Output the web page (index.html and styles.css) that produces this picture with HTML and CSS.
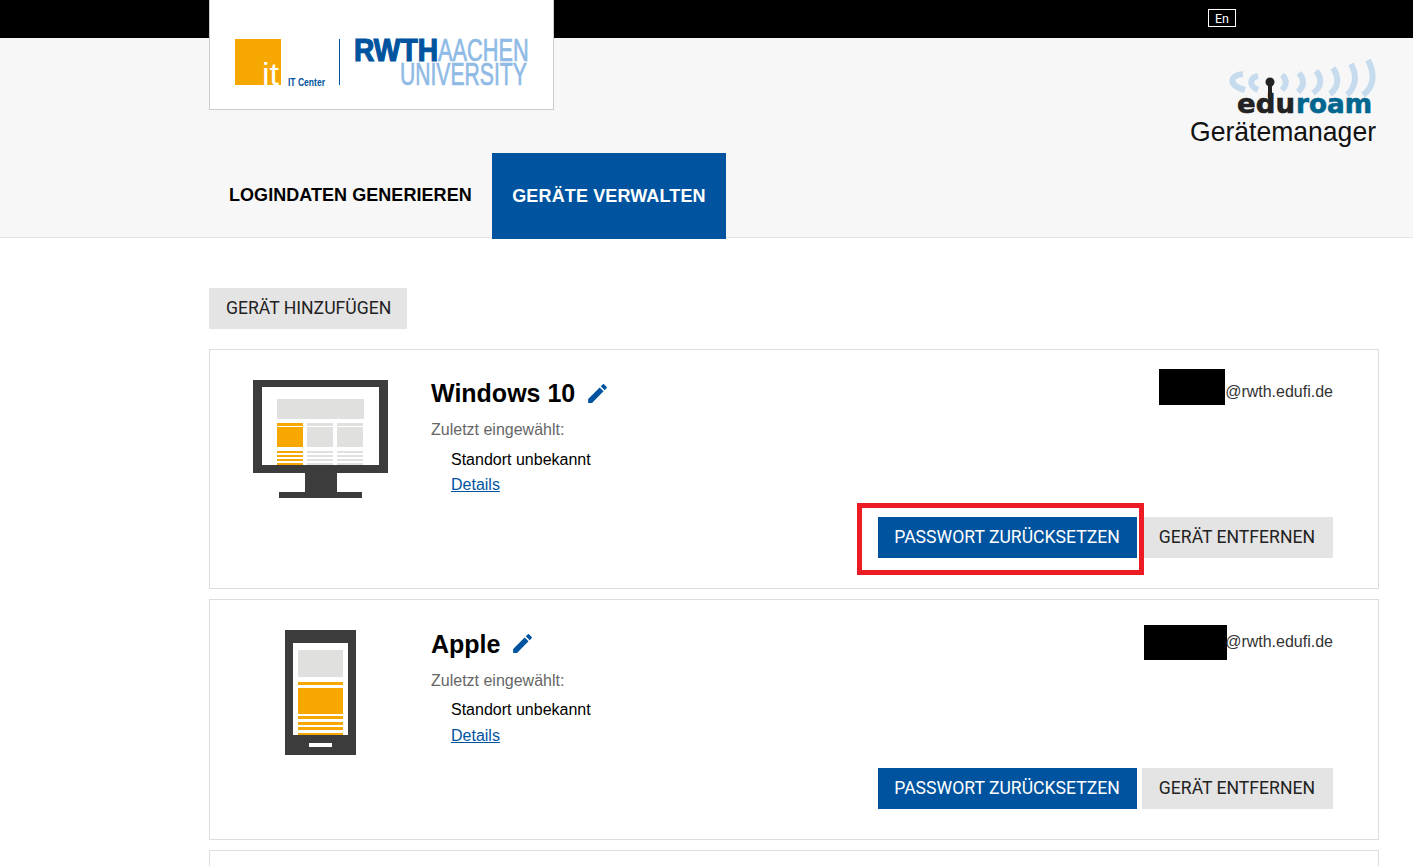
FILE: index.html
```html
<!DOCTYPE html>
<html lang="de">
<head>
    <meta charset="UTF-8">
    <meta name="viewport" content="width=device-width, initial-scale=1.0">
    <title>eduroam Gerätemanager</title>
    <link rel="stylesheet" href="styles.css">
</head>
<body>
    <div class="topbar">
        <a class="lang" href="#">En</a>
    </div>

    <a class="logo-box" href="#">
        <svg class="logo" width="345" height="110" viewBox="0 0 345 110">
            <rect x="26" y="39" width="46" height="46" fill="#f7a800"/>
            <text x="53" y="85" class="logo-it" textLength="17" lengthAdjust="spacingAndGlyphs">it</text>
            <text x="79" y="86" class="logo-center" textLength="37" lengthAdjust="spacingAndGlyphs">IT Center</text>
            <rect x="130" y="39" width="1" height="46" fill="#00549f"/>
            <text x="145" y="61" class="logo-rwth" textLength="84" lengthAdjust="spacingAndGlyphs">RWTH</text>
            <text class="logo-aachen" transform="translate(229 61) scale(.68 1)">AACHEN</text>
            <text class="logo-aachen" transform="translate(191 85) scale(.66 1)">UNIVERSITY</text>
        </svg>
    </a>

    <header class="header">
        <div class="brand">
            <svg class="eduroam" width="210" height="100" viewBox="0 0 210 100">
                <g fill="none" stroke="#c6dcee" stroke-width="6">
                    <path d="M63 20C50 21 47 31 65 36"/>
                    <path d="M78 22C69 24 69 32 78 36"/>
                    <path d="M102 21C107 25 107 31 102 36"/>
                    <path d="M119 19C125 26 124 33 118 38"/>
                    <path d="M136 17C143 25 141 34 133 39"/>
                    <path d="M153 14C160 24 158 34 150 40"/>
                    <path d="M171 10C178 22 175 34 167 41"/>
                    <path d="M188 6C196 21 193 34 183 41"/>
                </g>
                <circle cx="90" cy="28" r="4.500" fill="#222"/>
                <rect x="88" y="30" width="4" height="14" fill="#222"/>
                <text x="57" y="58.500" class="edu" textLength="58" lengthAdjust="spacingAndGlyphs">edu</text>
                <text x="116" y="58.500" class="roam" textLength="76" lengthAdjust="spacingAndGlyphs">roam</text>
                <text x="10" y="87" class="geraete" textLength="186" lengthAdjust="spacingAndGlyphs">Gerätemanager</text>
            </svg>
        </div>
        <nav class="tabs">
            <a class="tab" href="#">LOGINDATEN GENERIEREN</a>
            <a class="tab active" href="#">GERÄTE VERWALTEN</a>
        </nav>
    </header>

    <main class="content">
        <a class="btn btn-grey add-btn" href="#">GERÄT HINZUFÜGEN</a>

        <section class="card">
            <div class="device-icon">
                <svg width="135" height="118" viewBox="0 0 135 118">
                    <rect x="52" y="90" width="32" height="24" fill="#3c3c3c"/>
                    <rect x="26" y="112" width="83" height="6" fill="#3c3c3c"/>
                    <rect width="135" height="93" fill="#3c3c3c"/>
                    <rect x="9" y="7" width="117" height="78" fill="#fff"/>
                    <rect x="24" y="19" width="87" height="20" fill="#e0e0de"/>
                    <g fill="#f7a800">
                        <rect x="24" y="43" width="26" height="3"/>
                        <rect x="24" y="47" width="26" height="20"/>
                        <rect x="24" y="71" width="26" height="2"/>
                        <rect x="24" y="75" width="26" height="2"/>
                        <rect x="24" y="79" width="26" height="2"/>
                        <rect x="24" y="83" width="26" height="2"/>
                    </g>
                    <g fill="#e0e0de">
                        <rect x="54" y="43" width="26" height="3"/>
                        <rect x="54" y="47" width="26" height="20"/>
                        <rect x="54" y="71" width="26" height="2"/>
                        <rect x="54" y="75" width="26" height="2"/>
                        <rect x="54" y="79" width="26" height="2"/>
                        <rect x="54" y="83" width="26" height="2"/>
                        <rect x="84" y="43" width="26" height="3"/>
                        <rect x="84" y="47" width="26" height="20"/>
                        <rect x="84" y="71" width="26" height="2"/>
                        <rect x="84" y="75" width="26" height="2"/>
                        <rect x="84" y="79" width="26" height="2"/>
                        <rect x="84" y="83" width="26" height="2"/>
                    </g>
                </svg>
            </div>
            <div class="card-main">
                <div class="card-top">
                    <div class="info">
                        <h2 class="device-name">Windows 10
                            <svg class="pencil" width="25" height="25" viewBox="0 0 24 24"><path d="M3 17.25V21h3.750L17.810 9.940l-3.750-3.750L3 17.250zM20.710 7.040c.39-.39.39-1.020 0-1.410l-2.340-2.340c-.39-.39-1.020-.39-1.410 0l-1.830 1.830 3.750 3.750 1.830-1.830z"/></svg>
                        </h2>
                        <p class="last-seen">Zuletzt eingewählt:</p>
                        <p class="location">Standort unbekannt</p>
                        <a class="details" href="#">Details</a>
                    </div>
                    <div class="account">
                        <span class="redact redact-a"></span>
                        <span class="account-domain">@rwth.edufi.de</span>
                    </div>
                </div>
                <div class="actions">
                    <span class="marked">
                        <a class="btn btn-blue" href="#">PASSWORT ZURÜCKSETZEN</a>
                        <span class="red-frame"></span>
                    </span>
                    <a class="btn btn-grey" href="#">GERÄT ENTFERNEN</a>
                </div>
            </div>
        </section>

        <section class="card">
            <div class="device-icon">
                <svg width="71" height="125" viewBox="0 0 71 125">
                    <rect width="71" height="125" fill="#3c3c3c"/>
                    <rect x="8" y="13" width="55" height="92" fill="#fff"/>
                    <rect x="13" y="20" width="45" height="27" fill="#e0e0de"/>
                    <g fill="#f7a800">
                        <rect x="13" y="52" width="45" height="3"/>
                        <rect x="13" y="58" width="45" height="26"/>
                        <rect x="13" y="86" width="45" height="3"/>
                        <rect x="13" y="92" width="45" height="3"/>
                        <rect x="13" y="97" width="45" height="3"/>
                        <rect x="13" y="103" width="45" height="2"/>
                    </g>
                    <rect x="24" y="113" width="23" height="4" fill="#fff"/>
                </svg>
            </div>
            <div class="card-main">
                <div class="card-top">
                    <div class="info">
                        <h2 class="device-name">Apple
                            <svg class="pencil" width="25" height="25" viewBox="0 0 24 24"><path d="M3 17.25V21h3.750L17.810 9.940l-3.750-3.750L3 17.250zM20.710 7.040c.39-.39.39-1.020 0-1.410l-2.340-2.340c-.39-.39-1.020-.39-1.410 0l-1.830 1.830 3.750 3.750 1.830-1.830z"/></svg>
                        </h2>
                        <p class="last-seen">Zuletzt eingewählt:</p>
                        <p class="location">Standort unbekannt</p>
                        <a class="details" href="#">Details</a>
                    </div>
                    <div class="account">
                        <span class="redact redact-b"></span>
                        <span class="account-domain">@rwth.edufi.de</span>
                    </div>
                </div>
                <div class="actions">
                    <a class="btn btn-blue" href="#">PASSWORT ZURÜCKSETZEN</a>
                    <a class="btn btn-grey" href="#">GERÄT ENTFERNEN</a>
                </div>
            </div>
        </section>

        <section class="card card-cut"></section>
    </main>
</body>
</html>
```

FILE: styles.css
```css
html, body {
    height: 100%;
    overflow: hidden;
}
body {
    margin: 0;
    font-family: "Liberation Sans", Arial, sans-serif;
    font-size: 16px;
    color: #000;
    background: #fff;
}
a {
    text-decoration: none;
}
.topbar {
    height: 38px;
    background: #000;
    display: flex;
    justify-content: flex-end;
    align-items: flex-start;
    padding-right: 177px;
}
.lang {
    margin-top: 9px;
    width: 26px;
    height: 16px;
    border: 1px solid #fff;
    color: #fff;
    font-family: Roboto, sans-serif;
    font-size: 12.5px;
    line-height: 18px;
    text-align: center;
}
.logo-box {
    position: absolute;
    z-index: 2;
    top: 0;
    left: 209px;
    width: 343px;
    height: 109px;
    background: #fff;
    border: 1px solid #ccc;
    border-top: none;
}
.logo {
    display: block;
    margin-left: -1px;
}
.logo-it {
    font-family: "Liberation Sans", sans-serif;
    font-size: 32px;
    fill: #fff;
}
.logo-center {
    font-family: "Liberation Sans", sans-serif;
    font-size: 10px;
    font-weight: bold;
    fill: #00549f;
}
.logo-rwth {
    font-family: "Liberation Sans", sans-serif;
    font-size: 31px;
    font-weight: bold;
    fill: #00549f;
    stroke: #00549f;
    stroke-width: 1.2px;
}
.logo-aachen {
    font-family: "Liberation Sans", sans-serif;
    font-size: 32px;
    fill: #8ebae5;
    stroke: #8ebae5;
    stroke-width: .7px;
}
.header {
    box-sizing: border-box;
    height: 200px;
    background: #f7f7f7;
    border-bottom: 1px solid #e4e4e4;
    padding-left: 209px;
}
.brand {
    display: flex;
    justify-content: flex-end;
    padding: 16px 23px 0 0;
    height: 99px;
}
.eduroam {
    display: block;
}
.edu, .roam {
    font-family: "DejaVu Sans", sans-serif;
    font-size: 26px;
    font-weight: bold;
    stroke-width: .6px;
}
.edu {
    fill: #222;
    stroke: #222;
}
.roam {
    fill: #00658f;
    stroke: #00658f;
}
.geraete {
    font-family: "Liberation Sans", sans-serif;
    font-size: 27.5px;
    fill: #111;
}
.tabs {
    display: flex;
}
.tab {
    height: 86px;
    line-height: 84px;
    padding: 0 20px;
    font-family: "Liberation Sans", sans-serif;
    font-size: 18px;
    font-weight: bold;
    letter-spacing: .05px;
    color: #000;
}
.tab.active {
    padding: 0 20px 0 20.5px;
    background: #00549f;
    color: #fff;
    line-height: 86px;
    letter-spacing: .13px;
}
.content {
    width: 1170px;
    margin-left: 209px;
    padding-top: 50px;
}
.btn {
    display: inline-block;
    height: 41px;
    line-height: 41px;
    padding: 0 18px 0 17px;
    font-family: Roboto, sans-serif;
    font-size: 17.6px;
}
.btn-grey {
    background: #e4e4e4;
    color: #222;
}
.btn-blue {
    padding: 0 17px 0 16px;
    background: #00549f;
    color: #fff;
}
.add-btn {
    display: block;
    width: fit-content;
    padding: 0 16px 0 17px;
    margin-bottom: 20px;
}
.card {
    box-sizing: border-box;
    height: 240.4px;
    margin-bottom: 10px;
    border: 1px solid #ddd;
    display: flex;
}
.card-cut {
    height: 16px;
    margin-bottom: 0;
    border-bottom: none;
}
.device-icon {
    width: 221px;
    flex-shrink: 0;
    padding-top: 30px;
    display: flex;
    justify-content: center;
    align-items: flex-start;
}
.card-main {
    flex: 1;
    padding: 19px 45px 0 0;
}
.card-top {
    display: flex;
    justify-content: space-between;
    align-items: flex-start;
}
.info {
    padding-top: 6.2px;
}
.device-name {
    margin: 0 0 7px;
    font-size: 25px;
    line-height: 36px;
    font-weight: bold;
    display: flex;
    align-items: center;
    gap: 10px;
}
.pencil {
    fill: #00549f;
}
.last-seen {
    margin: 0 0 5.8px;
    line-height: 24px;
    color: #666;
}
.location {
    margin: 0 0 1.2px 20px;
    line-height: 24px;
}
.details {
    display: inline-block;
    margin-left: 20px;
    line-height: 24px;
    color: #00549f;
    text-decoration: underline;
}
.account {
    display: flex;
    align-items: flex-start;
}
.account-domain {
    margin-top: 11px;
    line-height: 24px;
    color: #333;
}
.redact {
    display: block;
    background: #000;
}
.redact-a {
    width: 66px;
    height: 36px;
}
.redact-b {
    width: 83px;
    height: 35px;
    margin: 6px -2px 0 0;
}
.actions {
    display: flex;
    justify-content: flex-end;
    gap: 5px;
    margin-top: 20px;
}
.marked {
    position: relative;
    display: block;
}
.red-frame {
    position: absolute;
    top: -14px;
    left: -21px;
    right: -7px;
    bottom: -17px;
    border: 5px solid #ed1c24;
}
```
